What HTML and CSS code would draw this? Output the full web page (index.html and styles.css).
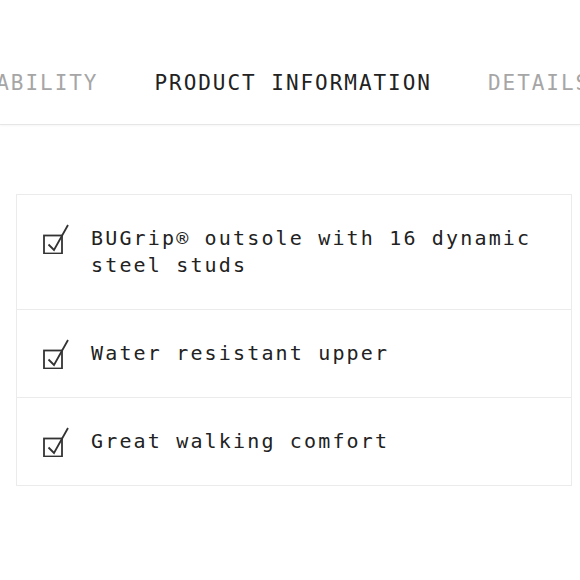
FILE: index.html
```html
<!DOCTYPE html>
<html lang="en">
<head>
<meta charset="utf-8">
<title>Product information</title>
<link rel="stylesheet" href="styles.css">
</head>
<body>
<nav class="tabs">
  <div class="tab-row">
    <span class="tab">SUSTAINABILITY</span>
    <span class="tab tab-active">PRODUCT INFORMATION</span>
    <span class="tab">DETAILS</span>
  </div>
</nav>
<ul class="features">
  <li class="feature">
    <svg class="check" width="26" height="31" viewBox="0 0 26 31" aria-hidden="true"><rect x="1" y="12.5" width="18" height="18" fill="none" stroke="#333" stroke-width="1.8"/><path d="M5.5 21.5 L11 27 L25 2" fill="none" stroke="#333" stroke-width="1.8" stroke-linejoin="miter"/></svg>
    <span class="feature-text">BUGrip® outsole with 16 dynamic steel studs</span>
  </li>
  <li class="feature">
    <svg class="check" width="26" height="31" viewBox="0 0 26 31" aria-hidden="true"><rect x="1" y="12.5" width="18" height="18" fill="none" stroke="#333" stroke-width="1.8"/><path d="M5.5 21.5 L11 27 L25 2" fill="none" stroke="#333" stroke-width="1.8" stroke-linejoin="miter"/></svg>
    <span class="feature-text">Water resistant upper</span>
  </li>
  <li class="feature">
    <svg class="check" width="26" height="31" viewBox="0 0 26 31" aria-hidden="true"><rect x="1" y="12.5" width="18" height="18" fill="none" stroke="#333" stroke-width="1.8"/><path d="M5.5 21.5 L11 27 L25 2" fill="none" stroke="#333" stroke-width="1.8" stroke-linejoin="miter"/></svg>
    <span class="feature-text">Great walking comfort</span>
  </li>
</ul>
</body>
</html>
```
FILE: styles.css
```css
html, body {
  margin: 0;
  padding: 0;
  background: #ffffff;
}

body {
  font-family: "DejaVu Sans Mono", "Liberation Mono", monospace;
  color: #222222;
  overflow: hidden;
}

.tabs {
  padding: 71px 0 29px;
  border-bottom: 1px solid #e6e6e6;
  box-shadow: 0 1px 2px rgba(0, 0, 0, 0.04);
  overflow: hidden;
}

.tab-row {
  display: flex;
  gap: 56px;
  margin-left: -106px;
  white-space: nowrap;
}

.tab {
  font-size: 21px;
  line-height: 24px;
  letter-spacing: 1.96px;
  color: #a6a6a6;
  flex: none;
}

.tab-active {
  color: #222222;
}

.features {
  list-style: none;
  margin: 69px 8px 0 16px;
  padding: 0;
  border: 1px solid #ebebeb;
}

.feature {
  display: flex;
  align-items: flex-start;
  gap: 22px;
  padding: 30px 20px 30px 26px;
}

.feature + .feature {
  border-top: 1px solid #ebebeb;
}

.check {
  flex: none;
  margin: -2px 0 -2px;
}

.feature-text {
  font-size: 20px;
  line-height: 27px;
  letter-spacing: 2.16px;
}
```
